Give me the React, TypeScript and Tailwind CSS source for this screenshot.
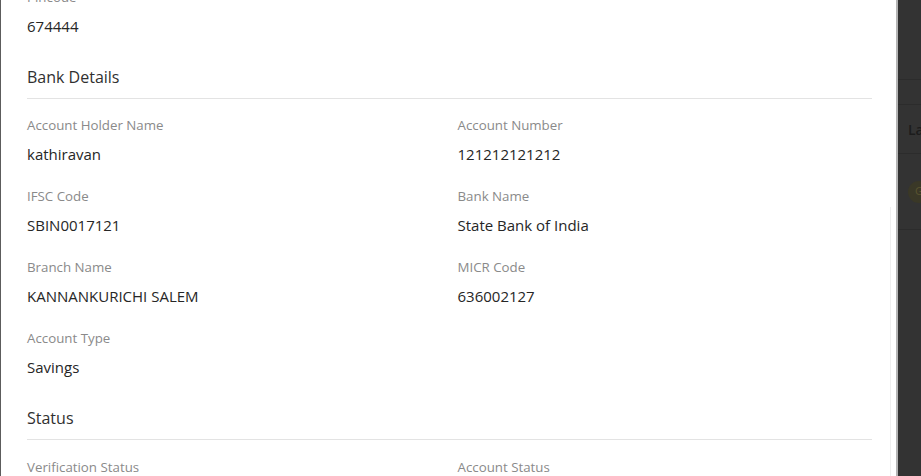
import React from "react";

type Field = { label: string; value?: string };

const bankFields: Field[] = [
  { label: "Account Holder Name", value: "kathiravan" },
  { label: "Account Number", value: "121212121212" },
  { label: "IFSC Code", value: "SBIN0017121" },
  { label: "Bank Name", value: "State Bank of India" },
  { label: "Branch Name", value: "KANNANKURICHI SALEM" },
  { label: "MICR Code", value: "636002127" },
  { label: "Account Type", value: "Savings" },
];

const statusFields: Field[] = [
  { label: "Verification Status" },
  { label: "Account Status" },
];

function FieldItem({ label, value }: Field) {
  return (
    <div className="flex flex-col">
      <span className="text-[13.3px] leading-[20px] text-[#8a8a8a]">{label}</span>
      {value !== undefined && (
        <span className="mt-[7px] text-[15px] leading-[24px] text-[#262626]">
          {value}
        </span>
      )}
    </div>
  );
}

function SectionHeader({ title }: { title: string }) {
  return (
    <div className="mt-[27px] border-b border-[#e3e3e3] pb-[9px]">
      <h3 className="text-[16px] leading-[24px] text-[#303030]">{title}</h3>
    </div>
  );
}

export default function App() {
  return (
    <div
      className="flex h-[476px] w-[921px] overflow-hidden bg-[#333]"
      style={{ fontFamily: '"Open Sans", "Noto Sans", sans-serif' }}
    >
      <div className="w-px shrink-0 bg-[#5c5c5c]" />

      {/* drawer */}
      <div className="flex w-[897px] shrink-0 border-r-2 border-[#b4b4b4] bg-white">
        <div className="flex flex-1 flex-col pl-[26px] pr-[18px] -mt-[13px]">
          {/* end of previous section */}
          <FieldItem label="Pincode" value="674444" />

          <SectionHeader title="Bank Details" />
          <div className="mt-[16px] grid grid-cols-2 gap-x-4 gap-y-5">
            {bankFields.map((f) => (
              <FieldItem key={f.label} {...f} />
            ))}
          </div>

          <SectionHeader title="Status" />
          <div className="mt-[17px] grid grid-cols-2 gap-x-4 gap-y-5">
            {statusFields.map((f) => (
              <FieldItem key={f.label} {...f} />
            ))}
          </div>
        </div>

        {/* scrollbar track */}
        <div className="flex w-[6px] flex-col">
          <div className="h-[207px]" />
          <div className="flex-1 border-l border-[#efefef]" />
        </div>
      </div>

      {/* page behind the overlay */}
      <div className="flex flex-1 flex-col">
        <div className="h-[80px] border-b border-[#2c2c2c]" />
        <div className="h-[25px] border-b border-[#2c2c2c]" />
        <div className="flex h-[49px] items-center border-b border-[#2c2c2c] pl-[10px]">
          <span className="text-[14px] font-semibold text-[#1c1c1c]">Last</span>
        </div>
        <div className="flex h-[76px] items-center border-b border-[#2c2c2c] pl-[10px]">
          <div className="flex h-[22px] w-[22px] shrink-0 items-center justify-center rounded-full bg-[#3a3827]">
            <span className="text-[11px] text-[#5a5530]">G</span>
          </div>
        </div>
      </div>
    </div>
  );
}
